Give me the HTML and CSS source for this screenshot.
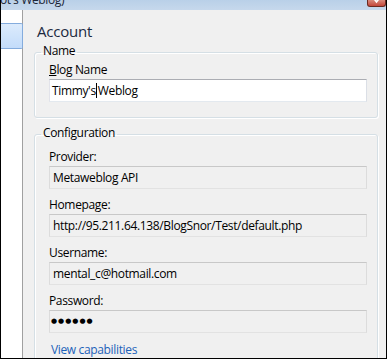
FILE: index.html
```html
<!DOCTYPE html>
<html lang="en">
<head>
    <meta charset="UTF-8">
    <meta name="viewport" content="width=device-width, initial-scale=1.0">
    <title>Account settings</title>
    <link rel="stylesheet" href="styles.css">
</head>
<body>
    <div class="window">
        <div class="titlebar">
            <span class="title">ot's Weblog)</span>
            <span class="close">
                <svg width="17" height="6" viewBox="0 0 17 6"><path d="M5.5 -2 L8.5 2 L11.5 -2" fill="none" stroke="#fff" stroke-width="1.6"/></svg>
            </span>
        </div>

        <div class="content">
            <div class="sidebar">
                <div class="nav-item selected"></div>
            </div>

            <div class="main">
                <h1>Account</h1>

                <fieldset class="group group-name">
                    <legend>Name</legend>
                    <div class="field-label"><u>B</u>log Name</div>
                    <div class="textbox">Timmy's<span class="caret"></span>Weblog</div>
                </fieldset>

                <fieldset class="group group-config">
                    <legend>Configuration</legend>
                    <div class="row">
                        <div class="field-label">Provider:</div>
                        <div class="readonly">Metaweblog API</div>
                    </div>
                    <div class="row">
                        <div class="field-label">Homepage:</div>
                        <div class="readonly">http://95.211.64.138/BlogSnor/Test/default.php</div>
                    </div>
                    <div class="row">
                        <div class="field-label">Username:</div>
                        <div class="readonly">mental_c@hotmail.com</div>
                    </div>
                    <div class="row">
                        <div class="field-label">Password:</div>
                        <div class="readonly password">●●●●●●</div>
                    </div>
                    <a class="link" href="#">View capabilities</a>
                </fieldset>
            </div>
        </div>
    </div>
</body>
</html>
```

FILE: styles.css
```css
body {
    margin: 0;
    font-family: "Open Sans", "Noto Sans", sans-serif;
    font-size: 12px;
    letter-spacing: -0.35px;
    color: #000;
    background: #f0f0f0;
}
.window {
    width: 387px;
    height: 359px;
    box-sizing: border-box;
    border: 1px solid #000;
    border-top: none;
    display: flex;
    flex-direction: column;
    overflow: hidden;
    background: #f0f0f0;
}
.titlebar {
    flex: none;
    height: 10px;
    display: flex;
    align-items: flex-start;
    overflow: hidden;
    background: linear-gradient(#b9d0e8, #c6d8ec);
}
.title {
    font-size: 12px;
    line-height: 16px;
    margin-top: -8px;
    margin-left: -1px;
    color: #1a2536;
    white-space: nowrap;
}
.close {
    margin-left: auto;
    width: 19px;
    height: 7px;
    box-sizing: border-box;
    border: 1px solid #6b2a20;
    border-top: none;
    border-radius: 0 0 3px 3px;
    background: linear-gradient(#d88a7c, #c4473a);
    display: flex;
    justify-content: center;
}
.content {
    flex: 1;
    display: flex;
    min-height: 0;
}
.sidebar {
    flex: none;
    width: 22px;
    background: #fff;
    box-shadow: inset -1px 0 0 #a0a0a0;
}
.nav-item {
    margin-top: 13px;
    height: 26px;
    box-sizing: border-box;
}
.nav-item.selected {
    border: 1px solid #84acdd;
    border-left: none;
    border-radius: 0 2px 2px 0;
    background: linear-gradient(#dcebfc, #c3dcfa);
}
.main {
    flex: 1;
    padding: 11px 8px 0 11px;
    overflow: hidden;
}
h1 {
    margin: 0 0 0 3px;
    font-size: 15px;
    font-weight: normal;
    line-height: 20px;
    letter-spacing: -0.2px;
    color: #1b2940;
}
.group {
    margin: 0;
    border: 1px solid #d5dfe5;
    border-radius: 3px;
    box-shadow: inset 1px 1px 0 #fff, 1px 1px 0 #fff;
    padding: 0 10px 15px 14px;
    min-width: 0;
}
.group legend {
    margin-left: -8px;
    padding: 0 2px 2px;
    line-height: 16px;
}
.group-name {
    margin-top: 2px;
    padding-top: 1px;
}
.group-config {
    margin-top: 7px;
    padding-top: 6px;
}
.field-label {
    line-height: 16px;
    margin-bottom: 1px;
}
.field-label u {
    text-decoration-thickness: 1px;
}
.row {
    margin-bottom: 8px;
}
.textbox,
.readonly {
    height: 23px;
    box-sizing: border-box;
    line-height: 21px;
    white-space: nowrap;
    overflow: hidden;
}
.textbox {
    margin-top: 1px;
    padding-left: 2px;
    background: #fff;
    border: 1px solid;
    border-color: #abadb3 #dbdfe6 #e3e9ef #e2e3ea;
}
.caret {
    display: inline-block;
    width: 1px;
    height: 15px;
    margin: 0 1px 0 0;
    background: #000;
    vertical-align: -3px;
}
.readonly {
    padding-left: 3px;
    background: #f0f0f0;
    border: 1px solid;
    border-color: #c8c8c8 #dcdcdc #e2e2e2 #dcdcdc;
}
.password {
    display: flex;
    align-items: center;
    padding-left: 1px;
    font-family: "DejaVu Sans", sans-serif;
    font-size: 7px;
    letter-spacing: 1px;
}
.link {
    display: inline-block;
    margin-top: 1px;
    margin-left: 2px;
    line-height: 16px;
    color: #1c62b9;
    text-decoration: none;
}
```
